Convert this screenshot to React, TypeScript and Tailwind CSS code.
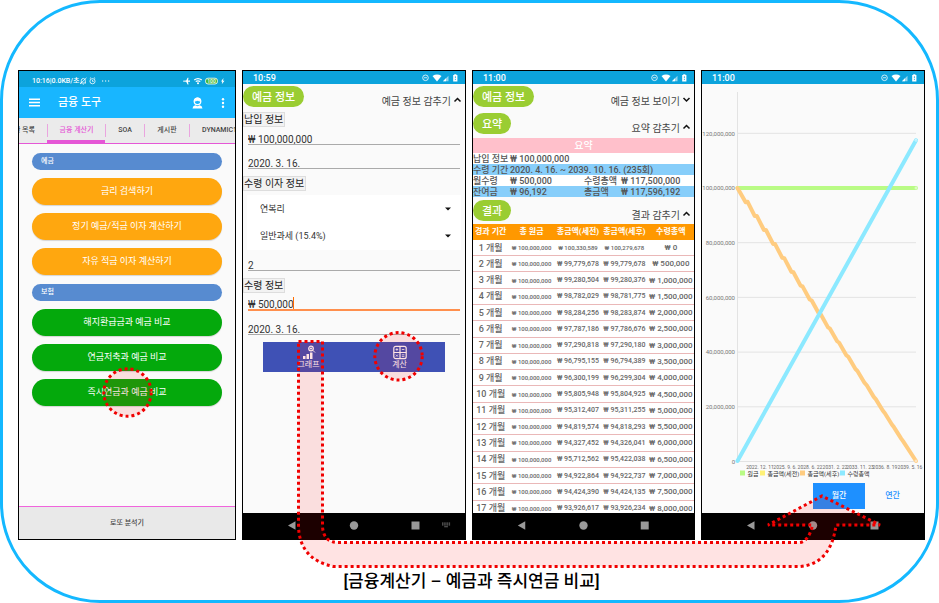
import React from "react";

const PILL = "rounded-full pt-px text-[9px] text-white shadow-[0_1px_1px_rgba(0,0,0,0.15)]";

function Panel({ children }: { children: React.ReactNode }) {
  return <section className="flex min-w-0 flex-col overflow-hidden border border-black bg-[#fafafa]">{children}</section>;
}

function StatusBar({ time }: { time: string }) {
  return (
    <div className="flex h-[13px] shrink-0 items-center justify-between bg-[#0ca3dc] pt-px pr-[7px] pl-2.5 text-[9px] leading-none font-medium text-white">
      <span>{time}</span>
      <svg width="36" height="8" viewBox="0 0 36 8" fill="#fff">
        <circle cx="3.5" cy="3.8" r="2.8" fill="none" stroke="#fff" strokeWidth="0.8" />
        <path d="M2 3.4h3v.8H2z" />
        <path d="M10.500 2Q15 -.8 19.500 2L15 7.400z" />
        <path d="M21 7.200h5.500V1.700z" opacity=".55" />
        <path d="M21 7.200h3V4.200z" />
        <path d="M31.200 1h1V.2h2.200V1h1v6.400h-4.200z" />
        <path d="M32.900 2.200h.8v2h-.8zM32.900 5h.8v1h-.8z" fill="#0ca3dc" />
      </svg>
    </div>
  );
}

function NavBar({ keyboard }: { keyboard?: boolean }) {
  return (
    <nav className="mt-auto h-[26px] w-full shrink-0 bg-black">
      <svg className="h-full w-full" viewBox="0 0 222 26" fill="#999">
        <path d="M45 12.500l7.500-4.300v8.600z" />
        <circle cx="111" cy="12.500" r="4.200" />
        <path d="M168.500 8.500h8v8h-8z" />
        {keyboard && (
          <path
            fill="#666"
            d="M199 9.500h1.500v1.200H199zM201.200 9.500h1.500v1.200h-1.500zM203.400 9.500h1.500v1.200h-1.500zM205.600 9.500h1.500v1.200h-1.500zM199 11.300h1.500v1.200H199zM201.200 11.300h1.500v1.200h-1.500zM203.400 11.300h1.500v1.200h-1.500zM205.600 11.300h1.500v1.200h-1.500zM201.200 13.300h3.700v1h-3.700z"
          />
        )}
      </svg>
    </nav>
  );
}

function Section({ title, toggle, open }: { title: string; toggle: string; open: boolean }) {
  return (
    <div className="flex h-[26px] shrink-0 items-start justify-between pt-0.5 pr-[3px]">
      <h2 className="flex h-[21px] items-center rounded-full bg-[#9acd32] px-[9px] pt-px text-[11px] leading-none font-medium text-white">{title}</h2>
      <button className="flex items-start gap-0.5 pt-2.5 text-[10px] leading-3 text-[#444]">
        {toggle}
        <svg width="9" height="8" viewBox="0 0 9 8" fill="none" stroke="#111" strokeWidth="1.500">
          <path d={open ? "M1.500 5.500L4.500 2.500L7.500 5.500" : "M1.500 2L4.500 5L7.500 2"} />
        </svg>
      </button>
    </div>
  );
}

function GroupLabel({ children }: { children: string }) {
  return (
    <div className="flex">
      <h3 className="h-[15px] border border-[#ddd] bg-[#f2f2f2] pr-px text-[10px] leading-[13px] text-[#222]">{children}</h3>
    </div>
  );
}

function Field({ label, value, tall, active }: { label: string; value: string; tall?: boolean; active?: boolean }) {
  return (
    <div className={`mx-[5px] flex flex-col justify-end ${tall ? "h-6" : "h-[18px]"}`}>
      <input
        aria-label={label}
        defaultValue={value}
        className={`-mb-0.5 h-[14px] text-[10px] text-[#333] outline-none ${active ? "w-[46px] border-r border-r-[#ff6d00]" : "w-full"}`}
      />
      <div className={active ? "h-0.5 bg-[#ff8f4d]" : "h-px bg-[#aaaaaa]"} />
    </div>
  );
}

function Picker({ label, value }: { label: string; value: string }) {
  return (
    <div className="relative mx-1 h-[27px] bg-white">
      <select aria-label={label} className="h-full w-full appearance-none bg-white pl-[13px] text-[9px] text-[#333]">
        <option>{value}</option>
      </select>
      <svg className="pointer-events-none absolute top-3 right-2.5" width="6" height="4" viewBox="0 0 6 4">
        <path d="M0 .5h6L3 3.500z" fill="#111" />
      </svg>
    </div>
  );
}

function ToolsPanel() {
  const savings = ["금리 검색하기", "정기 예금/적금 이자 계산하기", "자유 적금 이자 계산하기"];
  const insurance = ["해지환급금과 예금 비교", "연금저축과 예금 비교", "즉시연금과 예금 비교"];
  return (
    <Panel>
      <div className="flex h-4 shrink-0 items-center justify-between bg-[#0ca3dc] pt-1 pr-2.5 pl-[13px] text-[7px] leading-none font-medium whitespace-nowrap text-white">
        <span className="flex items-center">
          10:16|0.0KB/초
          <svg width="32" height="8" viewBox="0 0 32 8" fill="none" stroke="#fff" strokeWidth=".8">
            <path d="M1.500 6h5.500M2.300 6V3.500a2 2 0 0 1 4 0V6M1 7L7.500 .8M3.800 7.200h1" />
            <circle cx="13.500" cy="4.200" r="2.600" />
            <path d="M13.500 2.800v1.600h1.200M10.800 1.500l1.300-1M16.200 1.500l-1.300-1" />
            <path d="M23 4h1.200M26 4h1.200M29 4h1.200" strokeWidth="1.200" />
          </svg>
        </span>
        <svg width="42" height="8" viewBox="0 0 42 8">
          <path d="M0 4.500V3.700L3.200 3.600L4.600 .8h.9L5 3.600h2V4.700H5L5.500 7.400h-.9L3.200 4.700z" fill="#fff" />
          <path d="M11.200 3Q15 .2 18.800 3M12.700 4.600Q15 3 17.300 4.600" fill="none" stroke="#fff" strokeWidth="1.200" />
          <circle cx="15" cy="6.200" r="1" fill="#fff" />
          <rect x="22.500" y="1.200" width="12" height="5.800" rx="2.500" fill="#43b83c" stroke="#fff" strokeWidth=".8" />
          <text x="28.500" y="6" fontSize="5" textAnchor="middle" fill="#fff">100</text>
          <path d="M40.500 1L38 4.600h1.300L38.800 7.200L41.500 3.700H40z" fill="#fff" />
        </svg>
      </div>
      <header className="flex h-[31px] shrink-0 items-center bg-[#18b6ff] pr-2.5 pl-2.5 text-white">
        <button aria-label="메뉴">
          <svg width="11" height="9" viewBox="0 0 11 9" stroke="#fff" strokeWidth="1.400">
            <path d="M0 1.200h11M0 4.500h11M0 7.800h11" />
          </svg>
        </button>
        <h1 className="ml-[18px] text-[11px] leading-none font-medium">금융 도구</h1>
        <button aria-label="사용자" className="ml-auto">
          <svg width="11" height="12" viewBox="0 0 11 12" fill="none" stroke="#fff">
            <circle cx="5.500" cy="4.300" r="3.300" strokeWidth="1.200" />
            <path d="M2.200 4.200A3.300 3.300 0 0 1 8.800 4.200Q5.500 2.600 2.200 4.200z" fill="#fff" />
            <path d="M.5 11.500Q.8 8.600 3.300 8.200L5.500 9.200L7.700 8.200Q10.200 8.600 10.500 11.500z" fill="#fff" stroke="none" />
          </svg>
        </button>
        <button aria-label="더보기" className="ml-[18px]">
          <svg width="4" height="10" viewBox="0 0 4 10" fill="#fff">
            <circle cx="2" cy="1.300" r="1.200" />
            <circle cx="2" cy="5" r="1.200" />
            <circle cx="2" cy="8.700" r="1.200" />
          </svg>
        </button>
      </header>
      <div className="flex h-[25px] shrink-0 items-center overflow-hidden bg-[#ebebeb] text-[7px] font-medium whitespace-nowrap text-[#444]">
        <button className="flex w-7 shrink-0 justify-end pr-3">환 목록</button>
        <button className="flex h-full w-[58px] shrink-0 flex-col items-center justify-end text-[#e557d6]">
          <span className="mb-px h-[13px] w-full border-l border-l-[#eaa5df] leading-[13px]">금융 계산기</span>
          <span className="mt-[2px] h-[3px] w-full bg-[#e557d6]" />
        </button>
        <button className="h-[13px] w-10 shrink-0 border-x border-x-[#eaa5df]">SOA</button>
        <button className="h-[13px] w-[45px] shrink-0 border-r border-r-[#eaa5df]">게시판</button>
        <button className="shrink-0 pl-3">DYNAMIC1</button>
      </div>
      <div className="h-px shrink-0 bg-[#e557d6]" />
      <div className="flex flex-col gap-[9px] px-[13px] pt-[9px]">
        <div className="flex flex-col gap-2">
          <h2 className="h-[17px] rounded-full bg-[#578bd0] px-[9px] text-[7px] leading-[17px] font-medium text-white">예금</h2>
          {savings.map((t) => (
            <button key={t} className={`h-[27px] bg-[#ffa70f] ${PILL}`}>{t}</button>
          ))}
        </div>
        <div className="flex flex-col gap-2">
          <h2 className="h-[17px] rounded-full bg-[#578bd0] px-[9px] text-[7px] leading-[17px] font-medium text-white">보험</h2>
          {insurance.map((t) => (
            <button key={t} className={`h-[27px] bg-[#04a90c] ${PILL}`}>{t}</button>
          ))}
        </div>
      </div>
      <div className="mt-auto h-px shrink-0 bg-[#f064dc]" />
      <button className="h-8 shrink-0 bg-[#e9e9e9] text-[7px] font-medium text-[#444]">로또 분석기</button>
    </Panel>
  );
}

function InputPanel() {
  return (
    <Panel>
      <StatusBar time="10:59" />
      <Section title="예금 정보" toggle="예금 정보 감추기" open />
      <div className="flex flex-col pt-0.5">
        <GroupLabel>납입 정보</GroupLabel>
        <Field label="납입 금액" value="₩ 100,000,000" />
        <Field label="납입일" value="2020. 3. 16." tall />
        <div className="h-[7px]" />
        <GroupLabel>수령 이자 정보</GroupLabel>
        <div className="flex flex-col pt-1 pb-1">
          <Picker label="이자 방식" value="연복리" />
          <Picker label="과세 방식" value="일반과세 (15.4%)" />
        </div>
        <Field label="기간" value="2" />
        <div className="h-[7px]" />
        <GroupLabel>수령 정보</GroupLabel>
        <Field label="월 수령액" value="₩ 500,000" active />
        <Field label="수령 시작일" value="2020. 3. 16." tall />
      </div>
      <div className="mx-5 mt-[7px] flex h-[30px] bg-[#3f51b5] text-[8px] leading-none text-white">
        <button className="flex flex-1 flex-col items-center justify-center gap-px">
          <svg width="14" height="15" viewBox="0 0 14 15">
            <path d="M1 11h2.500v3H1zM4.500 9H7v5H4.500zM8 7.500h2.500V14H8z" fill="#fff" />
            <circle cx="9" cy="3.500" r="2.300" fill="none" stroke="#fff" strokeWidth="1.200" />
            <path d="M10.700 5.200L13 7.500M9 2.300v2.400M7.800 3.500h2.400" stroke="#fff" strokeWidth=".9" />
          </svg>
          그래프
        </button>
        <button className="flex flex-1 flex-col items-center justify-center gap-px">
          <svg width="14" height="15" viewBox="0 0 14 15" fill="none" stroke="#fff" strokeWidth="1.200">
            <rect x=".8" y="1.300" width="12.400" height="12.400" rx="2" />
            <path d="M7 1.300v12.400M.8 7.500h12.400" />
            <path d="M2.600 4.500h2.600M3.900 3.200v2.600M8.800 4.500h2.600M2.900 9.600l2 2M4.900 9.600l-2 2M8.800 9.800h2.600M8.800 11.600h2.600" strokeWidth=".8" />
          </svg>
          계산
        </button>
      </div>
      <NavBar keyboard />
    </Panel>
  );
}

const RESULTS = [
  ["100,330,589", "100,279,678", "0"],
  ["99,779,678", "99,779,678", "500,000"],
  ["99,280,504", "99,280,376", "1,000,000"],
  ["98,782,029", "98,781,775", "1,500,000"],
  ["98,284,256", "98,283,874", "2,000,000"],
  ["97,787,186", "97,786,676", "2,500,000"],
  ["97,290,818", "97,290,180", "3,000,000"],
  ["96,795,155", "96,794,389", "3,500,000"],
  ["96,300,199", "96,299,304", "4,000,000"],
  ["95,805,948", "95,804,925", "4,500,000"],
  ["95,312,407", "95,311,255", "5,000,000"],
  ["94,819,574", "94,818,293", "5,500,000"],
  ["94,327,452", "94,326,041", "6,000,000"],
  ["95,712,562", "95,422,038", "6,500,000"],
  ["94,922,864", "94,922,737", "7,000,000"],
  ["94,424,390", "94,424,135", "7,500,000"],
  ["93,926,617", "93,926,234", "8,000,000"],
];

function ResultPanel() {
  return (
    <Panel>
      <StatusBar time="11:00" />
      <Section title="예금 정보" toggle="예금 정보 보이기" open={false} />
      <div className="h-px shrink-0" />
      <Section title="요약" toggle="요약 감추기" open />
      <h3 className="mt-px h-[15px] shrink-0 bg-[#ffc0cb] text-center text-[10px] leading-[15px] font-medium text-white">요약</h3>
      <div className="shrink-0 text-[9px] leading-3 font-medium whitespace-nowrap text-[#555]">
        <div className="flex h-[11px] bg-white"><span className="w-[37px]">납입 정보</span><span>₩ 100,000,000</span></div>
        <div className="flex h-[11px] bg-[#87cefa]"><span className="w-[37px]">수령 기간</span><span>2020. 4. 16. ~ 2039. 10. 16. (235회)</span></div>
        <div className="flex h-[11px] bg-white"><span className="w-[37px]">월수령</span><span className="w-[74px]">₩ 500,000</span><span className="w-[37px]">수령총액</span><span>₩ 117,500,000</span></div>
        <div className="flex h-[11px] bg-[#87cefa]"><span className="w-[37px]">잔여금</span><span className="w-[74px]">₩ 96,192</span><span className="w-[37px]">총금액</span><span>₩ 117,596,192</span></div>
      </div>
      <div className="h-px shrink-0" />
      <Section title="결과" toggle="결과 감추기" open />
      <div className="min-h-0 flex-1 overflow-hidden bg-white">
        <table className="h-[293px] w-full table-fixed border-collapse text-center leading-none font-medium whitespace-nowrap text-[#666]">
          <thead>
            <tr className="h-4 bg-[#ff9800] text-[8px] text-white">
              <th className="w-[16%] p-0 font-bold">경과 기간</th>
              <th className="w-[21%] p-0 font-bold">총 원금</th>
              <th className="w-[21%] p-0 font-bold">총금액(세전)</th>
              <th className="w-[21%] p-0 font-bold">총금액(세후)</th>
              <th className="w-[21%] p-0 font-bold">수령총액</th>
            </tr>
          </thead>
          <tbody>
            {RESULTS.map(([before, after, total], i) => (
              <tr key={total} className="border-b border-b-[#eab8b8]">
                <td className="p-0 pt-px text-[9px]">{i + 1} 개월</td>
                <td className="p-0 pt-px text-[6px]">₩ 100,000,000</td>
                <td className={i ? "p-0 pt-px text-[7px]" : "p-0 pt-px text-[6px]"}>₩ {before}</td>
                <td className={i ? "p-0 pt-px text-[7px]" : "p-0 pt-px text-[6px]"}>₩ {after}</td>
                <td className="p-0 pt-px text-[8px]">₩ {total}</td>
              </tr>
            ))}
          </tbody>
        </table>
      </div>
      <NavBar />
    </Panel>
  );
}

function ChartPanel() {
  const ticks = ["120,000,000", "100,000,000", "80,000,000", "60,000,000", "40,000,000", "20,000,000", "0"];
  const dates = ["2022. 12. 11", "2025. 9. 6.", "2028. 6. 22", "2031. 2. 22", "2033. 11. 23", "2036. 8. 19", "2039. 5. 16"];
  const legend = [
    { x: 38, color: "#b9fb85", label: "원금" },
    { x: 58, color: "#fff176", label: "총금액(세전)" },
    { x: 98, color: "#ffcc80", label: "총금액(세후)" },
    { x: 138, color: "#8ce9ff", label: "수령총액" },
  ];
  // Yearly interest credits flatten the falling balance, less so as it shrinks.
  const steps = Array.from({ length: 18 }, (_, i) => {
    const n = i + 1;
    const x = 35.5 + n * 9.15;
    const y = 104 + n * 14;
    const bump = 1.8 * (1 - n / 19);
    return `L${x - 1} ${y - 1.5 + bump} L${x + 1} ${y + 1.5 - bump}`;
  }).join(" ");
  return (
    <Panel>
      <StatusBar time="11:00" />
      <svg className="w-full shrink-0" viewBox="0 0 222 396" role="img" aria-label="예금과 즉시연금 비교 그래프">
        <g stroke="#e3e3e3" strokeWidth="1">
          <path d="M35.500 8V377" />
          {ticks.map((t, i) => (
            <path key={t} d={`M35 ${49.3 + i * 54.7}H214`} />
          ))}
        </g>
        <g fontSize="6" fill="#777" textAnchor="end">
          {ticks.map((t, i) => (
            <text key={t} x="33" y={51.5 + i * 54.7}>{t}</text>
          ))}
        </g>
        <g fill="none" strokeWidth="4" strokeLinecap="round" strokeLinejoin="round">
          <path d="M35.500 104H214" stroke="#b9fb85" />
          <path d={`M35.500 104 ${steps} L214 377`} stroke="#ffcc80" />
          <path d="M35.500 377L214 56.300" stroke="#8ce9ff" />
        </g>
        <g fill="none" stroke="#fff" strokeWidth=".6">
          <circle cx="214" cy="104" r="1" />
          <circle cx="214" cy="56.300" r="1" />
          <circle cx="214" cy="377" r="1" />
        </g>
        <g fontSize="5" fill="#666" textAnchor="middle">
          {dates.map((d, i) => (
            <text key={d} x={58 + i * 25} y="385">{d}</text>
          ))}
        </g>
        <g fontSize="6" fill="#333">
          {legend.map((l) => (
            <g key={l.label}>
              <rect x={l.x} y="386.500" width="5" height="5" fill={l.color} />
              <text x={l.x + 7.5} y="391.500">{l.label}</text>
            </g>
          ))}
        </g>
      </svg>
      <div className="mt-[3px] flex h-[26px] justify-end pr-1 text-[8px] font-medium">
        <button className="w-[52px] bg-[#1e90ff] text-white">월간</button>
        <button className="w-[55px] text-[#1e90ff]">연간</button>
      </div>
      <NavBar />
    </Panel>
  );
}

export default function App() {
  return (
    <main className="relative flex min-h-screen flex-col rounded-[100px] border-[3px] border-[#14b8ff] bg-white pt-[67px] pr-[11px] pl-[15px] font-['Roboto','Noto_Sans_CJK_KR',sans-serif]">
      <div className="grid h-[470px] grid-cols-[218fr_224fr_223fr_224fr] gap-1.5">
        <ToolsPanel />
        <InputPanel />
        <ResultPanel />
        <ChartPanel />
      </div>
      <p className="mt-[29px] text-center text-[17px] leading-6 font-medium text-black">[금융계산기 – 예금과 즉시연금 비교]</p>
      <svg className="pointer-events-none absolute -inset-[3px]" width="939" height="603" viewBox="0 0 939 603">
        <g fill="#ff0000" fillOpacity=".11" stroke="#f00000" strokeWidth="3" strokeDasharray="3 3">
          <circle cx="127.500" cy="392.500" r="23.700" />
          <circle cx="398.500" cy="356.300" r="23.700" />
          <path d="M298.500 341.500H322.500V527Q324 542.500 338 542.500H800Q809 541 812.500 525H768L822 496L880 525H836Q831 564 800 566.500H334Q300 560 298.500 527z" />
        </g>
      </svg>
    </main>
  );
}
